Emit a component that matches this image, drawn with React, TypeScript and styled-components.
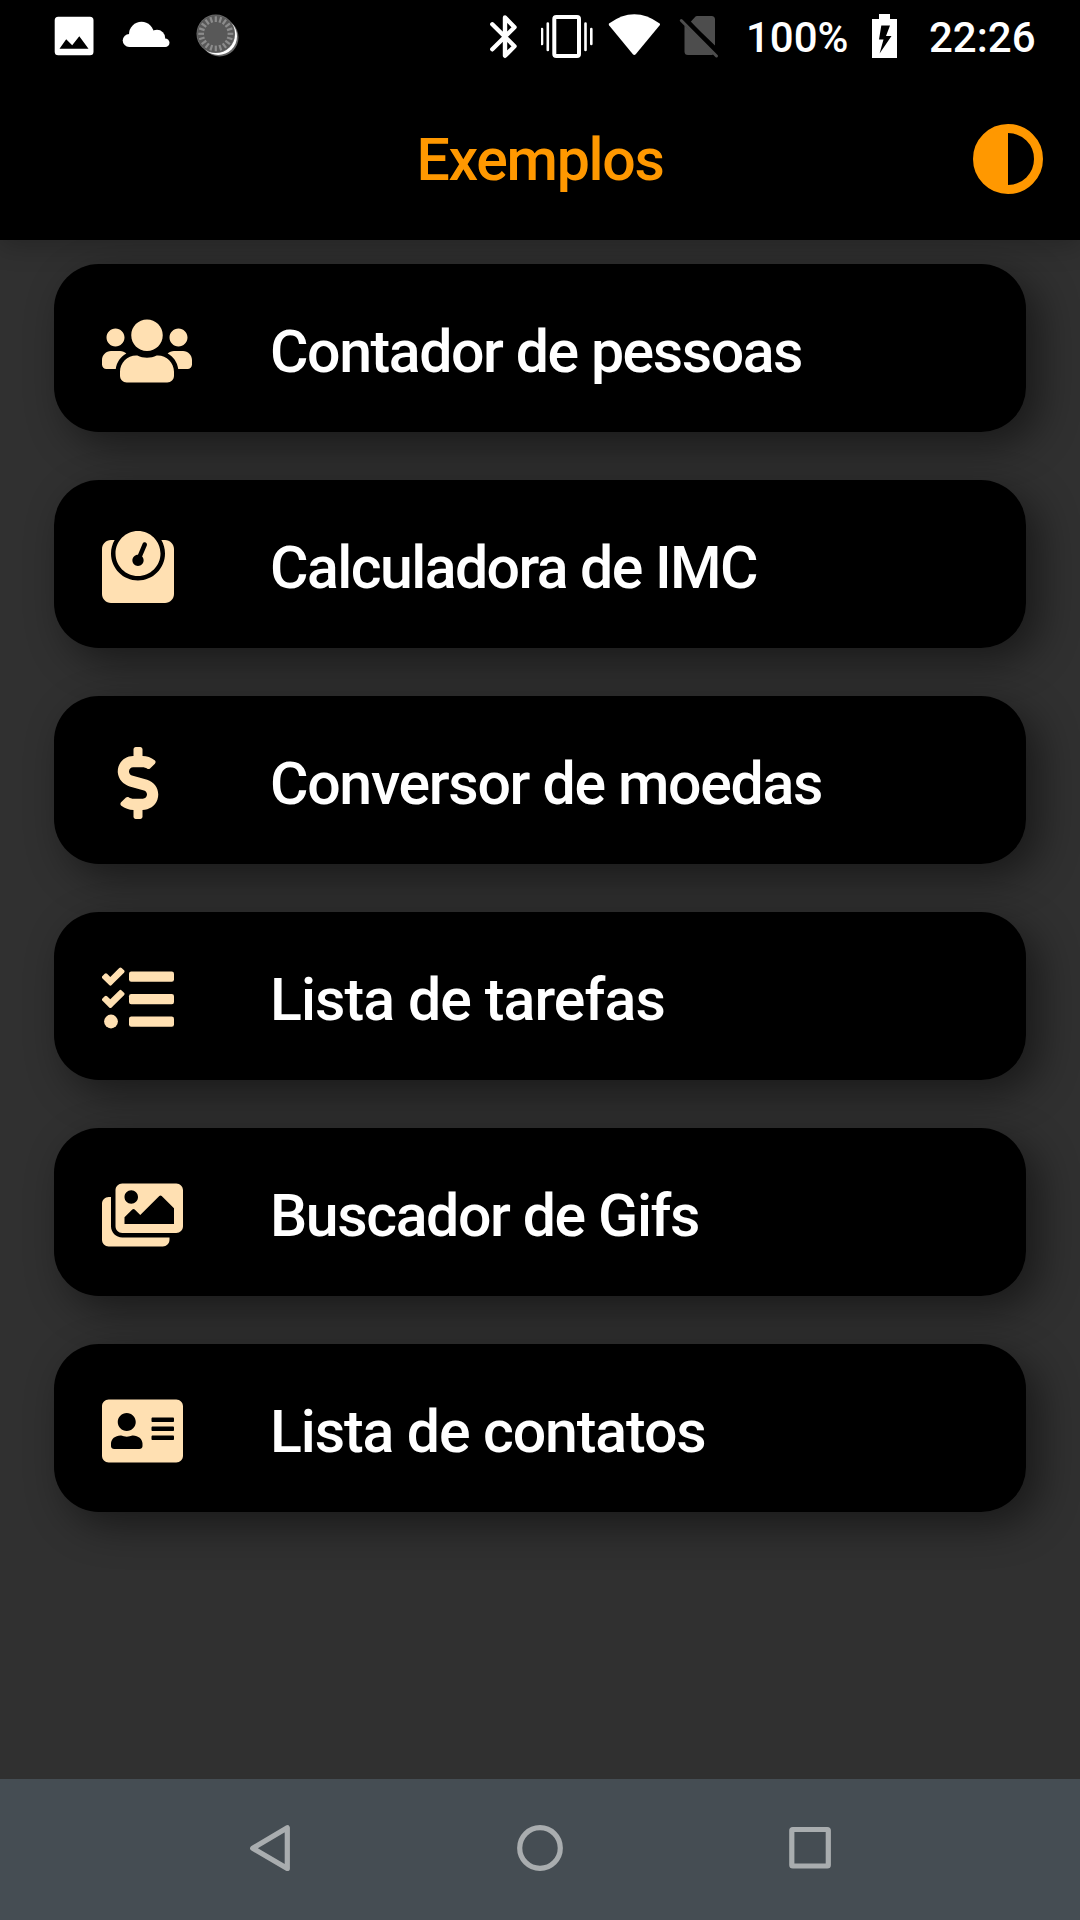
import React from "react";
import styled, { createGlobalStyle } from "styled-components";
import {
  FaUsers,
  FaWeight,
  FaDollarSign,
  FaImages,
  FaAddressCard,
} from "react-icons/fa";

const GlobalStyle = createGlobalStyle`
  *, *::before, *::after { box-sizing: border-box; }
  body {
    margin: 0;
    background: #303030;
    font-family: Roboto, "Noto Sans", sans-serif;
  }
`;

const Screen = styled.div`
  display: flex;
  flex-direction: column;
  width: 1080px;
  height: 1920px;
  overflow: hidden;
  background: #303030;
`;

const TopArea = styled.header`
  position: relative;
  z-index: 1;
  flex: none;
  height: 240px;
  background: #000;
  box-shadow: 0 6px 24px rgba(0, 0, 0, 0.22);
`;

const StatusBar = styled.div`
  display: flex;
  justify-content: space-between;
  height: 72px;
  padding: 0 44px 0 54px;
`;

const StatusGroup = styled.div`
  display: flex;
  align-items: stretch;
`;

const Glyph = styled.svg<{ $gap?: number }>`
  display: block;
  flex: none;
  height: 72px;
  margin-left: ${(p) => p.$gap ?? 0}px;
`;

const StatusText = styled.span<{ $gap: number; $width: number }>`
  width: ${(p) => p.$width}px;
  margin-left: ${(p) => p.$gap}px;
  padding-top: 2px;
  color: #fff;
  font-size: 42px;
  font-weight: 500;
  line-height: 72px;
  white-space: nowrap;
`;

const AppBar = styled.div`
  display: grid;
  grid-template-columns: 1fr auto 1fr;
  align-items: center;
  height: 168px;
  padding: 6px 37px 0;
`;

const Title = styled.h1`
  grid-column: 2;
  margin: 0;
  padding-top: 2px;
  color: #ff9800;
  font-size: 59px;
  font-weight: 500;
  letter-spacing: -1.3px;
  line-height: 70px;
`;

const ThemeButton = styled.button`
  justify-self: end;
  width: 70px;
  height: 70px;
  padding: 0;
  border: 0;
  background: none;

  svg {
    display: block;
  }
`;

const Menu = styled.main`
  display: flex;
  flex: 1;
  flex-direction: column;
  gap: 48px;
  padding: 24px 54px 0;
`;

const MenuCard = styled.div`
  display: flex;
  flex: none;
  align-items: center;
  height: 168px;
  padding-left: 48px;
  border-radius: 45px;
  background: #000;
  box-shadow: 13px 13px 40px rgba(0, 0, 0, 0.48);
`;

const IconSlot = styled.div<{ $width: number }>`
  flex: none;
  width: 168px;
  padding-top: 6px;
  color: #ffe0b2;

  svg {
    display: block;
    width: ${(p) => p.$width}px;
    height: 72px;
  }
`;

const Label = styled.span<{ $tracking: number }>`
  padding-top: 7px;
  color: #fff;
  font-size: 59px;
  font-weight: 500;
  letter-spacing: ${(p) => p.$tracking}px;
  line-height: 70px;
  white-space: nowrap;
`;

const NavBar = styled.nav`
  display: flex;
  flex: none;
  align-items: center;
  justify-content: space-between;
  height: 141px;
  padding: 0 246px 4px;
  background: #454d53;

  svg {
    display: block;
    fill: none;
    stroke: #a9adaf;
    stroke-width: 5.2;
    stroke-linejoin: round;
  }
`;

function TasksIcon() {
  return (
    <svg viewBox="0 0 512 512" fill="currentColor">
      <path d="M139.610 35.500a12 12 0 0 0-17 0L58.930 98.810l-22.700-22.120a12 12 0 0 0-17 0L3.530 92.410a12 12 0 0 0 0 17l47.590 47.400a12.780 12.780 0 0 0 17.610 0l15.590-15.620L156.520 69a12.090 12.090 0 0 0 .090-17zm0 159.190a12 12 0 0 0-17 0l-63.680 63.720-22.700-22.100a12 12 0 0 0-17 0L3.530 252a12 12 0 0 0 0 17L51 316.500a12.770 12.770 0 0 0 17.600 0l15.700-15.690 72.200-72.220a12 12 0 0 0 .090-16.900z" />
      <circle cx="64" cy="416" r="49" />
      <rect x="192" y="60" width="320" height="74" rx="16" />
      <rect x="192" y="220" width="320" height="74" rx="16" />
      <rect x="192" y="380" width="320" height="74" rx="16" />
    </svg>
  );
}

interface MenuItem {
  label: string;
  icon: React.ComponentType;
  width: number;
  tracking: number;
}

const items: MenuItem[] = [
  { label: "Contador de pessoas", icon: FaUsers, width: 90, tracking: -1.43 },
  { label: "Calculadora de IMC", icon: FaWeight, width: 72, tracking: -1.56 },
  { label: "Conversor de moedas", icon: FaDollarSign, width: 72, tracking: -1.31 },
  { label: "Lista de tarefas", icon: TasksIcon, width: 72, tracking: -0.9 },
  { label: "Buscador de Gifs", icon: FaImages, width: 81, tracking: -1.39 },
  { label: "Lista de contatos", icon: FaAddressCard, width: 81, tracking: -1.1 },
];

const ticks = Array.from({ length: 20 }, (_, i) => i * 18);

function NotificationIcons() {
  return (
    <StatusGroup>
      <Glyph width="40" viewBox="54 0 40 72">
        <path
          fill="#fff"
          fillRule="evenodd"
          d="M58.2 16.8H90a3.5 3.5 0 0 1 3.5 3.5V51.700a3.500 3.500 0 0 1-3.500 3.500H58.200a3.500 3.500 0 0 1-3.500-3.500V20.300a3.500 3.500 0 0 1 3.500-3.500ZM59.500 48.700H88.500L79.300 36.300L72.200 45.300L66.200 39.300Z"
        />
      </Glyph>
      <Glyph width="48" viewBox="122 0 48 72" $gap={28} fill="#fff">
        <circle cx="141.500" cy="34.300" r="12.500" />
        <circle cx="157" cy="38" r="8.200" />
        <circle cx="129.200" cy="40.500" r="6.500" />
        <circle cx="165.200" cy="42.700" r="4.300" />
        <path d="M129.200 36H157L165.200 40V47H129.200Z" />
      </Glyph>
      <Glyph width="44" viewBox="195 0 44 72" $gap={25}>
        <circle cx="219.500" cy="37.500" r="19" fill="#666" />
        <circle cx="218.300" cy="36.300" r="18.700" fill="#fff" />
        <circle cx="215.800" cy="33.800" r="19.300" fill="#6a6a6a" />
        <circle cx="215.800" cy="33.800" r="18.500" fill="#585858" />
        {ticks.map((a) => (
          <line
            key={a}
            x1="215.800"
            y1="16.300"
            x2="215.800"
            y2="22"
            stroke="#8c8c8c"
            strokeWidth="2.200"
            transform={`rotate(${a} 215.800 33.800)`}
          />
        ))}
      </Glyph>
    </StatusGroup>
  );
}

function SystemIcons() {
  return (
    <StatusGroup>
      <Glyph width="28" viewBox="489 0 28 72">
        <path
          d="M492.300 24.300L514.500 46.200L505 55.800V17.500L514.500 27.300L492.300 49.300"
          fill="none"
          stroke="#fff"
          strokeWidth="4.400"
          strokeLinecap="round"
          strokeLinejoin="round"
        />
      </Glyph>
      <Glyph width="52" viewBox="541 0 52 72" $gap={24} fill="none" stroke="#fff">
        <rect x="554.300" y="17" width="24.700" height="39" rx="2" strokeWidth="4" />
        <path
          d="M542 29V44M547.800 23.500V50M585.500 23.500V50M591.300 29V44"
          strokeWidth="2.600"
          strokeLinecap="round"
        />
      </Glyph>
      <Glyph width="52" viewBox="608 0 52 72" $gap={15}>
        <path
          fill="#fff"
          d="M609 23.500Q634.300 5 659.700 23.500Q660.400 24.400 659.500 25.600L635.700 54.300Q634.300 55.600 632.900 54.300L609.200 25.600Q608.400 24.400 609 23.500Z"
        />
      </Glyph>
      <Glyph width="40" viewBox="679 0 40 72" $gap={19}>
        <path
          fill="#4d4d4d"
          d="M690.500 22L695.500 16.600Q696 16 697 16H711.500Q715 16 715 19.500V45.600ZM684.500 25.500L714.500 53Q713.600 55 711.500 55H688Q684.500 55 684.500 51.500Z"
        />
        <path d="M684.500 17.500L717 52" stroke="#000" strokeWidth="3.500" />
        <path
          d="M681.300 20.500L716.500 56"
          stroke="#4d4d4d"
          strokeWidth="3"
          strokeLinecap="round"
        />
      </Glyph>
      <StatusText $gap={27} $width={104}>100%</StatusText>
      <Glyph width="26" viewBox="871 0 26 72" $gap={21}>
        <path
          fill="#fff"
          fillRule="evenodd"
          d="M879 14H890V19H897V58H872V19H879ZM881.300 25.500L879 39.500H883.500L879.600 53.500L891.500 36H886L890 25.500Z"
        />
      </Glyph>
      <StatusText $gap={32} $width={107}>22:26</StatusText>
    </StatusGroup>
  );
}

export default function App() {
  return (
    <>
      <GlobalStyle />
      <Screen>
        <TopArea>
          <StatusBar>
            <NotificationIcons />
            <SystemIcons />
          </StatusBar>
          <AppBar>
            <Title>Exemplos</Title>
            <ThemeButton aria-label="Tema">
              <svg width="70" height="70" viewBox="0 0 70 70">
                <circle cx="35" cy="35" r="30.500" fill="none" stroke="#ff9800" strokeWidth="9" />
                <path d="M35 5A30 30 0 0 0 35 65Z" fill="#ff9800" />
              </svg>
            </ThemeButton>
          </AppBar>
        </TopArea>
        <Menu>
          {items.map(({ label, icon: Icon, width, tracking }) => (
            <MenuCard key={label}>
              <IconSlot $width={width}>
                <Icon />
              </IconSlot>
              <Label $tracking={tracking}>{label}</Label>
            </MenuCard>
          ))}
        </Menu>
        <NavBar>
          <svg width="48" height="50" viewBox="246 1823 48 50">
            <path d="M252.700 1848.200L287.300 1827.800V1868.500Z" />
          </svg>
          <svg width="50" height="50" viewBox="0 0 50 50">
            <circle cx="25" cy="25" r="20.300" />
          </svg>
          <svg width="48" height="50" viewBox="786 1823 48 50">
            <rect x="791.800" y="1829.500" width="36.500" height="36.500" rx="1" />
          </svg>
        </NavBar>
      </Screen>
    </>
  );
}
